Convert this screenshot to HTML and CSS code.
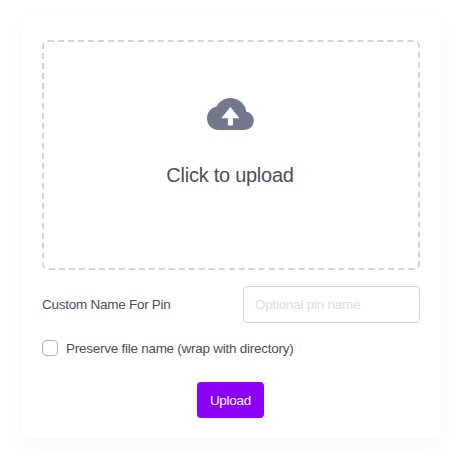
FILE: index.html
```html
<!DOCTYPE html>
<html lang="en">
<head>
<meta charset="utf-8">
<title>Upload</title>
<link rel="stylesheet" href="styles.css">
</head>
<body>
<form class="card">
  <div class="dropzone">
    <svg class="cloud" viewBox="0 0 47 33" aria-hidden="true"><path d="M11.7 33C5.2 33 0 27.8 0 21.4C0 15.6 3.7 11 9.2 9.8A16 16 0 0 1 39.3 14.4A9.4 9.4 0 0 1 37.6 33ZM23.4 10L14.3 21.2H20.9V28.5H25.9V21.2H32.5Z"/></svg>
    <span class="prompt">Click to upload</span>
  </div>
  <div class="field">
    <label class="label" for="pin">Custom Name For Pin</label>
    <input class="input" id="pin" type="text" placeholder="Optional pin name">
  </div>
  <label class="check"><input class="checkbox" type="checkbox"><span>Preserve file name (wrap with directory)</span></label>
  <button class="upload" type="button">Upload</button>
</form>
</body>
</html>
```
FILE: styles.css
```css
* { box-sizing: border-box; }
body {
  margin: 0;
  height: 450px;
  overflow: hidden;
  background: #fff;
  color: #495057;
  font: 13.5px/20px "Liberation Sans", Arial, sans-serif;
  letter-spacing: -0.26px;
}
.card {
  width: 418px;
  height: 424px;
  margin: 14px 0 0 22px;
  padding: 26px 20px 20px;
  display: flex;
  flex-direction: column;
  border-radius: 4px;
  background: #fff;
  box-shadow: 0 8px 24px rgba(0, 0, 0, 0.03);
}
.dropzone {
  height: 230px;
  padding: 55px 2px 0 0;
  display: flex;
  flex-direction: column;
  align-items: center;
  border: 2px dashed #d0d5db;
  border-radius: 6px;
}
.cloud { width: 47px; height: 33px; fill: #74788d; fill-rule: evenodd; }
.prompt { margin-top: 30px; font-size: 20px; line-height: 30px; }
.field {
  margin-top: 16px;
  display: flex;
  align-items: center;
  justify-content: space-between;
}
.input {
  width: 177px;
  height: 37px;
  padding: 0 11px;
  border: 1px solid #ced4da;
  border-radius: 4px;
  background: #fff;
  font: inherit;
  letter-spacing: inherit;
}
.input::placeholder { color: #dedede; opacity: 1; }
.check {
  margin-top: 15px;
  display: flex;
  align-items: center;
  gap: 8px;
}
.checkbox {
  appearance: none;
  width: 16px;
  height: 16px;
  margin: 0;
  border: 1px solid #adb5bd;
  border-radius: 4px;
}
.check span { padding-top: 1px; margin-bottom: -1px; }
.upload {
  width: 67px;
  height: 36px;
  margin: 24px 0 0 155px;
  padding: 2px 0 0;
  border: 0;
  border-radius: 4px;
  background: #8c00f5;
  color: #fff;
  font: inherit;
  letter-spacing: inherit;
}
```
